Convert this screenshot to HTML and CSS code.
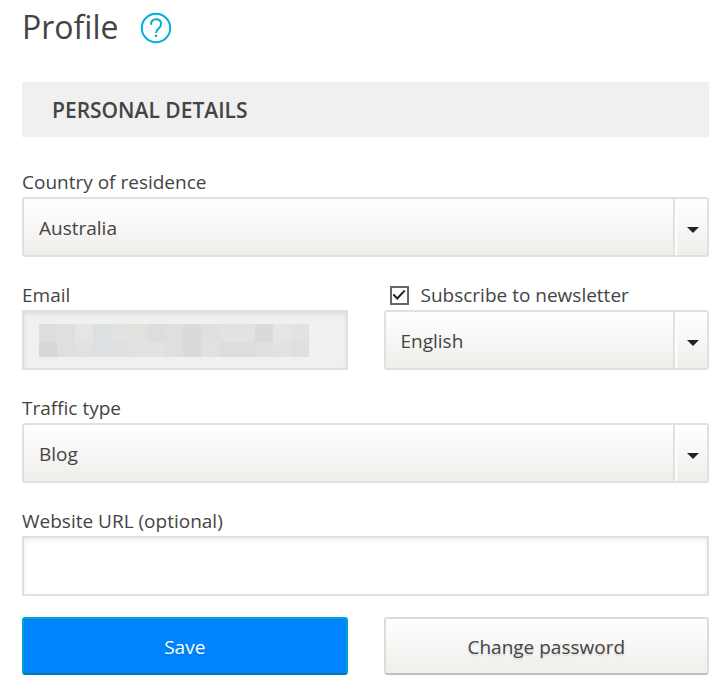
FILE: index.html
```html
<!DOCTYPE html>
<html lang="en">
<head>
<meta charset="utf-8">
<meta name="viewport" content="width=device-width, initial-scale=1">
<title>Profile</title>
<link rel="stylesheet" href="styles.css">
</head>
<body>
<main class="profile">
  <header class="profile-header">
    <h1>Profile</h1>
    <button class="help" type="button" aria-label="Help">
      <svg viewBox="0 0 32 32" width="32" height="32" fill="none" stroke="currentColor" stroke-width="2" aria-hidden="true">
        <circle cx="16" cy="16" r="14.2"/>
        <path d="M11 12.8C11 9 13 7.3 16 7.3s5.1 1.8 5.1 4.7c0 2.3-1.2 3.4-2.7 4.7S16 19 16 21"/>
        <path d="M16 22.7v2.4" stroke-width="2.4"/>
      </svg>
    </button>
  </header>
  <h2 class="section-title">PERSONAL DETAILS</h2>
  <form class="form">
    <div class="field wide">
      <label for="country">Country of residence</label>
      <div class="select"><select id="country"><option>Australia</option></select></div>
    </div>
    <div class="field">
      <label for="email">Email</label>
      <div class="masked">
        <input class="text-input" id="email" type="email" readonly>
        <svg class="mask" viewBox="0 0 270 33" width="270" height="33" shape-rendering="crispEdges" aria-hidden="true">
          <path fill="#dfdfdf" d="M0 0h270v33H0z"/>
          <path fill="#dfdedc" d="M0 0h18v18H0z"/>
          <path fill="#e5e5e5" d="M36 0h18v18H36zM234 0h18v18h-18z"/>
          <path fill="#dce0de" d="M54 0h18v18H54zM18 18h18v15H18z"/>
          <path fill="#e2e2e2" d="M72 0h18v18H72zM180 0h18v18h-18zM252 0h18v18h-18zM90 18h18v15H90zM234 18h18v15h-18z"/>
          <path fill="#e1e1de" d="M90 0h18v18H90zM162 18h18v15h-18z"/>
          <path fill="#dddddd" d="M108 0h18v18h-18zM180 18h36v15h-36z"/>
          <path fill="#dadada" d="M144 0h18v33h-18zM216 0h18v18h-18z"/>
          <path fill="#e0e3e2" d="M198 0h18v18h-18zM108 18h18v15h-18z"/>
          <path fill="#d7d7d6" d="M0 18h18v15H0z"/>
          <path fill="#e3e1df" d="M36 18h18v15H36z"/>
          <path fill="#dddfe2" d="M54 18h18v15H54z"/>
        </svg>
      </div>
    </div>
    <div class="field">
      <div class="check">
        <input id="newsletter" type="checkbox" checked>
        <label for="newsletter">Subscribe to newsletter</label>
      </div>
      <div class="select"><select aria-label="Newsletter language"><option>English</option></select></div>
    </div>
    <div class="field wide">
      <label for="traffic">Traffic type</label>
      <div class="select"><select id="traffic"><option>Blog</option></select></div>
    </div>
    <div class="field wide">
      <label for="website">Website URL (optional)</label>
      <input class="text-input" id="website" type="url">
    </div>
    <div class="actions wide">
      <button class="button primary" type="button">Save</button>
      <button class="button" type="button">Change password</button>
    </div>
  </form>
</main>
</body>
</html>
```
FILE: styles.css
```css
*,
*::before,
*::after {
  box-sizing: border-box;
}

body {
  margin: 0;
  background: #fff;
  color: #444;
  font: 19px/26px "Open Sans", sans-serif;
}

.profile {
  padding: 0 14px 16px 22px;
}

.profile-header {
  display: flex;
  align-items: center;
  gap: 22px;
  height: 56px;
}

h1,
h2 {
  margin: 0;
}

h1 {
  padding-bottom: 2px;
  font-size: 32px;
  font-weight: 400;
  line-height: 54px;
}

.help {
  display: flex;
  padding: 0;
  border: 0;
  background: none;
  color: #00b0d8;
}

.section-title {
  margin: 26px 0 32px;
  padding: 14px 30px 13px;
  background: #f0f0f0;
  font-size: 21px;
  font-weight: 600;
  line-height: 28px;
}

.form {
  display: grid;
  grid-template-columns: 1fr 1fr;
  gap: 25px 36px;
}

.wide {
  grid-column: 1 / -1;
}

.field {
  display: flex;
  flex-direction: column;
  min-width: 0;
}

.field > label,
.check {
  padding-bottom: 2px;
}

.select,
.masked {
  position: relative;
}

select,
.text-input {
  display: block;
  width: 100%;
  height: 60px;
  margin: 0;
  border: 2px solid #e0e0e0;
  color: inherit;
  font: inherit;
}

select {
  appearance: none;
  padding: 2px 50px 0 15px;
  border-radius: 3px;
  background: linear-gradient(#fff, #f0eeeb);
}

.select::before {
  content: "";
  position: absolute;
  top: 2px;
  right: 2px;
  bottom: 2px;
  width: 34px;
  border-left: 2px solid #e0e0e0;
  box-shadow: inset 2px 0 1px #fff;
  pointer-events: none;
}

.select::after {
  content: "";
  position: absolute;
  top: 30px;
  right: 10px;
  border: 6px solid transparent;
  border-top-color: #222;
  border-bottom: 0;
  pointer-events: none;
}

.text-input {
  padding: 0 15px;
  border-radius: 0;
  background: #fff;
  box-shadow: inset 0 2px 4px rgba(0, 0, 0, 0.08);
}

.text-input:read-only {
  background: #f0f0f0;
}

.mask {
  position: absolute;
  top: 14px;
  left: 17px;
  max-width: calc(100% - 34px);
}

.check {
  display: flex;
  align-items: center;
  gap: 12px;
  padding-left: 6px;
}

.check input {
  appearance: none;
  display: grid;
  width: 19px;
  height: 19px;
  margin: 0;
  border: 2px solid #666;
  background: #fff;
}

.check input:checked::before {
  content: "";
  place-self: center;
  width: 13px;
  height: 10px;
  background: #222;
  clip-path: polygon(0 50%, 12% 38%, 36% 70%, 88% 0, 100% 10%, 37% 100%);
}

.actions {
  display: grid;
  grid-template-columns: 1fr 1fr;
  gap: 36px;
  margin-top: -4px;
}

.button {
  height: 58px;
  padding: 2px 16px 0;
  border: 2px solid #dcdcd8;
  border-bottom-color: #c0c0bd;
  border-radius: 3px;
  background: linear-gradient(#fff, #f0eeeb);
  color: #444;
  font: inherit;
  text-shadow: 0 2px 2px rgba(0, 0, 0, 0.12);
}

.primary {
  border-color: #00a5cf;
  border-bottom-color: #007aa8;
  background: #0085ff;
  color: #fff;
}
```
